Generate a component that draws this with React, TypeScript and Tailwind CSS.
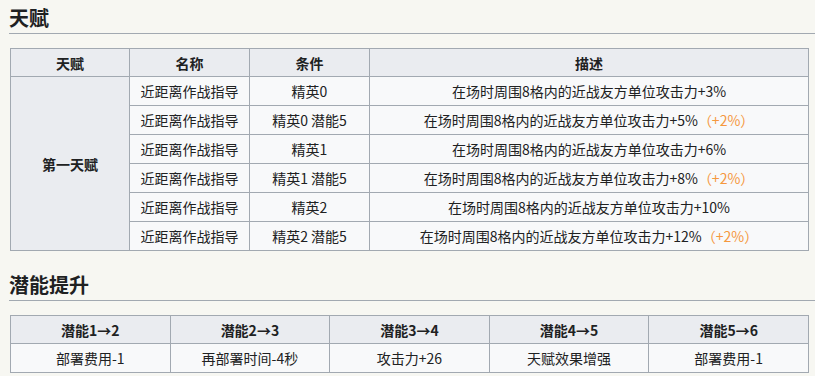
import React from 'react';

const talentRows = [
  { cond: '精英0', desc: '在场时周围8格内的近战友方单位攻击力+3%', extra: '' },
  { cond: '精英0 潜能5', desc: '在场时周围8格内的近战友方单位攻击力+5%', extra: '（+2%）' },
  { cond: '精英1', desc: '在场时周围8格内的近战友方单位攻击力+6%', extra: '' },
  { cond: '精英1 潜能5', desc: '在场时周围8格内的近战友方单位攻击力+8%', extra: '（+2%）' },
  { cond: '精英2', desc: '在场时周围8格内的近战友方单位攻击力+10%', extra: '' },
  { cond: '精英2 潜能5', desc: '在场时周围8格内的近战友方单位攻击力+12%', extra: '（+2%）' },
];

const potentials = [
  { head: '潜能1→2', body: '部署费用-1' },
  { head: '潜能2→3', body: '再部署时间-4秒' },
  { head: '潜能3→4', body: '攻击力+26' },
  { head: '潜能4→5', body: '天赋效果增强' },
  { head: '潜能5→6', body: '部署费用-1' },
];

const font = { fontFamily: '"Noto Sans CJK SC", "Noto Sans", sans-serif' };

function Heading({ children }: { children: React.ReactNode }) {
  return (
    <h2 className="text-[20px] leading-[24px] font-bold text-[#202122] pt-[6px] pb-[3px] border-b border-[#a2a9b1]">
      {children}
    </h2>
  );
}

const th = 'border border-[#a2a9b1] bg-[#eaecf0] font-bold text-center h-[28px] p-0';
const td = 'border border-[#a2a9b1] bg-[#f8f9fa] text-center h-[29px] p-0';

export default function App() {
  return (
    <div className="min-h-screen bg-[#f7f7f2] text-[#202122] pl-[9px] pb-4" style={font}>
      {/* 天赋 */}
      <Heading>天赋</Heading>
      <table className="mt-[14px] ml-[1px] w-[799px] border-collapse table-fixed text-[14px] leading-[20px]">
        <colgroup>
          <col className="w-[119px]" />
          <col className="w-[120px]" />
          <col className="w-[120px]" />
          <col />
        </colgroup>
        <thead>
          <tr>
            <th className={th}>天赋</th>
            <th className={th}>名称</th>
            <th className={th}>条件</th>
            <th className={th}>描述</th>
          </tr>
        </thead>
        <tbody>
          {talentRows.map((r, i) => (
            <tr key={i}>
              {i === 0 && (
                <th rowSpan={6} className={th}>
                  第一天赋
                </th>
              )}
              <td className={td}>近距离作战指导</td>
              <td className={td}>{r.cond}</td>
              <td className={td}>
                {r.desc}
                {r.extra && <span className="text-[#f5983e]">{r.extra}</span>}
              </td>
            </tr>
          ))}
        </tbody>
      </table>

      {/* 潜能提升 */}
      <div className="mt-[16px]">
        <Heading>潜能提升</Heading>
      </div>
      <table className="mt-[14px] ml-[1px] w-[799px] border-collapse table-fixed text-[14px] leading-[20px]">
        <thead>
          <tr>
            {potentials.map((p) => (
              <th key={p.head} className={th}>
                {p.head}
              </th>
            ))}
          </tr>
        </thead>
        <tbody>
          <tr>
            {potentials.map((p, i) => (
              <td key={i} className={td}>
                {p.body}
              </td>
            ))}
          </tr>
        </tbody>
      </table>
    </div>
  );
}
